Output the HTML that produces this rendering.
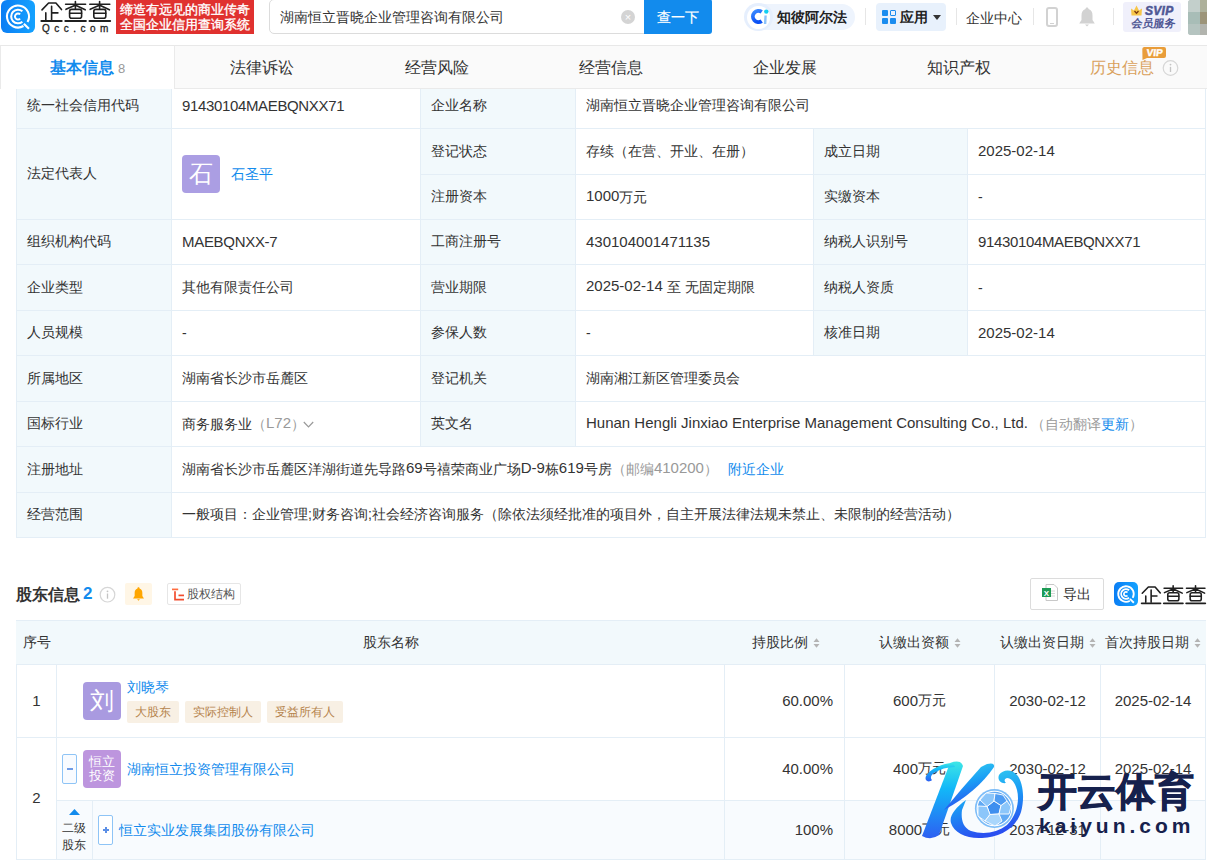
<!DOCTYPE html>
<html><head><meta charset="utf-8">
<style>
*{box-sizing:border-box;margin:0;padding:0}
html,body{width:1207px;height:861px;overflow:hidden;background:#fff}
body{position:relative;font-family:"Liberation Sans",sans-serif;color:#333;font-size:14px}
.a{position:absolute;white-space:nowrap}
.c{position:absolute;border:1px solid #e4eef6;display:flex;align-items:center;white-space:nowrap;font-size:14px;color:#333}
.lb{background:#f2f9fc}
.blue{color:#128bed}
.L{font-size:15px;position:relative;top:-1px}
.gr{color:#999}
.tag{display:inline-block;height:22px;line-height:23px;padding:0 8px;background:#f8f0e4;color:#b5834c;font-size:12px;border-radius:2px;margin-right:6px}
</style></head><body>
<div class="c lb" style="left:16px;top:83px;width:156px;height:46px;padding-left:10px;"><div>统一社会信用代码</div></div>
<div class="c" style="left:171px;top:83px;width:250px;height:46px;padding-left:10px;"><div><span style="letter-spacing:-0.35px"><span class="L">91430104MAEBQNXX71</span></span></div></div>
<div class="c lb" style="left:420px;top:83px;width:156px;height:46px;padding-left:10px;"><div>企业名称</div></div>
<div class="c" style="left:575px;top:83px;width:631px;height:46px;padding-left:10px;"><div>湖南恒立晋晓企业管理咨询有限公司</div></div>
<div class="c lb" style="left:16px;top:128px;width:156px;height:92px;padding-left:10px;"><div>法定代表人</div></div>
<div class="c" style="left:171px;top:128px;width:250px;height:92px;padding-left:10px;"><div><span style="display:inline-block;width:38px;height:38px;border-radius:4px;background:#ab9ee3;color:#fff;font-size:24px;line-height:38px;text-align:center">石</span><span class="blue" style="margin-left:11px;position:relative;top:-3px">石圣平</span></div></div>
<div class="c lb" style="left:420px;top:128px;width:156px;height:47px;padding-left:10px;"><div>登记状态</div></div>
<div class="c" style="left:575px;top:128px;width:239px;height:47px;padding-left:10px;"><div>存续（在营、开业、在册）</div></div>
<div class="c lb" style="left:813px;top:128px;width:155px;height:47px;padding-left:10px;"><div>成立日期</div></div>
<div class="c" style="left:967px;top:128px;width:239px;height:47px;padding-left:10px;"><div><span class="L">2025-02-14</span></div></div>
<div class="c lb" style="left:420px;top:174px;width:156px;height:46px;padding-left:10px;"><div>注册资本</div></div>
<div class="c" style="left:575px;top:174px;width:239px;height:46px;padding-left:10px;"><div><span class="L">1000</span>万元</div></div>
<div class="c lb" style="left:813px;top:174px;width:155px;height:46px;padding-left:10px;"><div>实缴资本</div></div>
<div class="c" style="left:967px;top:174px;width:239px;height:46px;padding-left:10px;"><div>-</div></div>
<div class="c lb" style="left:16px;top:219px;width:156px;height:46px;padding-left:10px;"><div>组织机构代码</div></div>
<div class="c" style="left:171px;top:219px;width:250px;height:46px;padding-left:10px;"><div><span style="letter-spacing:-0.3px"><span class="L">MAEBQNXX-7</span></span></div></div>
<div class="c lb" style="left:420px;top:219px;width:156px;height:46px;padding-left:10px;"><div>工商注册号</div></div>
<div class="c" style="left:575px;top:219px;width:239px;height:46px;padding-left:10px;"><div><span class="L">430104001471135</span></div></div>
<div class="c lb" style="left:813px;top:219px;width:155px;height:46px;padding-left:10px;"><div>纳税人识别号</div></div>
<div class="c" style="left:967px;top:219px;width:239px;height:46px;padding-left:10px;"><div><span style="letter-spacing:-0.35px"><span class="L">91430104MAEBQNXX71</span></span></div></div>
<div class="c lb" style="left:16px;top:264px;width:156px;height:47px;padding-left:10px;"><div>企业类型</div></div>
<div class="c" style="left:171px;top:264px;width:250px;height:47px;padding-left:10px;"><div>其他有限责任公司</div></div>
<div class="c lb" style="left:420px;top:264px;width:156px;height:47px;padding-left:10px;"><div>营业期限</div></div>
<div class="c" style="left:575px;top:264px;width:239px;height:47px;padding-left:10px;"><div><span class="L">2025-02-14 </span>至 无固定期限</div></div>
<div class="c lb" style="left:813px;top:264px;width:155px;height:47px;padding-left:10px;"><div>纳税人资质</div></div>
<div class="c" style="left:967px;top:264px;width:239px;height:47px;padding-left:10px;"><div>-</div></div>
<div class="c lb" style="left:16px;top:310px;width:156px;height:46px;padding-left:10px;"><div>人员规模</div></div>
<div class="c" style="left:171px;top:310px;width:250px;height:46px;padding-left:10px;"><div>-</div></div>
<div class="c lb" style="left:420px;top:310px;width:156px;height:46px;padding-left:10px;"><div>参保人数</div></div>
<div class="c" style="left:575px;top:310px;width:239px;height:46px;padding-left:10px;"><div>-</div></div>
<div class="c lb" style="left:813px;top:310px;width:155px;height:46px;padding-left:10px;"><div>核准日期</div></div>
<div class="c" style="left:967px;top:310px;width:239px;height:46px;padding-left:10px;"><div><span class="L">2025-02-14</span></div></div>
<div class="c lb" style="left:16px;top:355px;width:156px;height:47px;padding-left:10px;"><div>所属地区</div></div>
<div class="c" style="left:171px;top:355px;width:250px;height:47px;padding-left:10px;"><div>湖南省长沙市岳麓区</div></div>
<div class="c lb" style="left:420px;top:355px;width:156px;height:47px;padding-left:10px;"><div>登记机关</div></div>
<div class="c" style="left:575px;top:355px;width:631px;height:47px;padding-left:10px;"><div>湖南湘江新区管理委员会</div></div>
<div class="c lb" style="left:16px;top:401px;width:156px;height:46px;padding-left:10px;"><div>国标行业</div></div>
<div class="c" style="left:171px;top:401px;width:250px;height:46px;padding-left:10px;"><div>商务服务业<span class="gr">（<span class="L">L72</span>）</span><svg width="11" height="7" viewBox="0 0 11 7" style="margin-left:-2px;vertical-align:1px"><path d="M0.8 1 L5.5 5.8 L10.2 1" stroke="#999" stroke-width="1.2" fill="none"/></svg></div></div>
<div class="c lb" style="left:420px;top:401px;width:156px;height:46px;padding-left:10px;"><div>英文名</div></div>
<div class="c" style="left:575px;top:401px;width:631px;height:46px;padding-left:10px;"><div><span class="L">Hunan Hengli Jinxiao Enterprise Management Consulting Co., Ltd.</span><span class="gr" style="margin-left:3px">（自动翻译</span><span class="blue">更新</span><span class="gr">）</span></div></div>
<div class="c lb" style="left:16px;top:446px;width:156px;height:47px;padding-left:10px;"><div>注册地址</div></div>
<div class="c" style="left:171px;top:446px;width:1035px;height:47px;padding-left:10px;"><div>湖南省长沙市岳麓区洋湖街道先导路<span class="L">69</span>号禧荣商业广场<span class="L">D-9</span>栋<span class="L">619</span>号房<span class="gr">（邮编<span class="L">410200</span>）</span><span class="blue" style="margin-left:10px">附近企业</span></div></div>
<div class="c lb" style="left:16px;top:492px;width:156px;height:46px;padding-left:10px;"><div>经营范围</div></div>
<div class="c" style="left:171px;top:492px;width:1035px;height:46px;padding-left:10px;"><div>一般项目：企业管理;财务咨询;社会经济咨询服务（除依法须经批准的项目外，自主开展法律法规未禁止、未限制的经营活动）</div></div><!-- TABS -->
<div class="a" style="left:0;top:45px;width:1207px;height:44px;background:#fafafa;border-top:1px solid #e8e8e8;border-bottom:1px solid #eaeaea"></div>
<div class="a" style="left:0;top:45px;width:175px;height:44px;background:#fff;border-top:1px solid #e8e8e8;border-right:1px solid #eaeaea;border-left:1px solid #eaeaea"></div>
<div class="a" style="left:50px;top:59px;font-size:16px;line-height:18px;font-weight:bold;color:#128bed">基本信息</div>
<div class="a" style="left:118px;top:61px;font-size:13px;line-height:15px;color:#999">8</div>
<div class="a" style="left:230px;top:59px;font-size:16px;line-height:18px;color:#333">法律诉讼</div>
<div class="a" style="left:405px;top:59px;font-size:16px;line-height:18px;color:#333">经营风险</div>
<div class="a" style="left:579px;top:59px;font-size:16px;line-height:18px;color:#333">经营信息</div>
<div class="a" style="left:753px;top:59px;font-size:16px;line-height:18px;color:#333">企业发展</div>
<div class="a" style="left:927px;top:59px;font-size:16px;line-height:18px;color:#333">知识产权</div>
<div class="a" style="left:1090px;top:59px;font-size:16px;line-height:18px;color:#d9a05b">历史信息</div>
<svg class="a" style="left:1162px;top:60px" width="17" height="17" viewBox="0 0 17 17"><circle cx="8.5" cy="8" r="7.3" fill="none" stroke="#d6d6d6" stroke-width="1.2"/><circle cx="8.5" cy="4.6" r="0.9" fill="#c4c4c4"/><path d="M8.5 6.8 V12" stroke="#c4c4c4" stroke-width="1.3"/></svg>
<svg class="a" style="left:1142px;top:47px" width="25" height="14" viewBox="0 0 25 14"><path d="M2 0 H22 A2 2 0 0 1 24 2 V9 A2 2 0 0 1 22 11 H5 L0.5 13 L0.3 2 A2 2 0 0 1 2 0Z" fill="#e99d3a"/><text x="12.8" y="9.3" font-family="Liberation Sans" font-weight="bold" font-size="10" fill="#fff" stroke="#fff" stroke-width="0.4" text-anchor="middle" transform="skewX(-6)" style="transform-origin:12px 5px">VIP</text></svg>

<!-- HEADER -->
<div id="hdr">
  <!-- logo icon -->
  <div class="a" style="left:1px;top:0;width:34px;height:33px;border-radius:6px;background:linear-gradient(90deg,#0b7ef4,#14a2ff)"></div>
  <svg class="a" style="left:1px;top:0" width="34" height="33" viewBox="0 0 34 33">
    <path d="M26.53 22 A11 11 0 1 0 22.5 26.03" fill="none" stroke="#fff" stroke-width="2.1"/>
    <path d="M23.6 24.4 L27.2 28" stroke="#fff" stroke-width="2.1" stroke-linecap="square"/>
    <path d="M21.37 11.29 A6.8 6.8 0 1 0 21.37 21.71" fill="none" stroke="#fff" stroke-width="2.1"/>
    <path d="M19.12 14.38 A3 3 0 1 0 19.12 18.62" fill="none" stroke="#fff" stroke-width="2"/>
  </svg>
  <svg class="a" style="left:0;top:0" width="116" height="24" viewBox="0 0 116 24"><g fill="none" stroke="#1f1f1f" stroke-width="1.6" stroke-linecap="round" stroke-linejoin="round"><path d="M42 9.9 L48.6 3 H55.9 L61.5 9.6 M51.6 6.3 V20 M51.6 12.9 H57.9 M45.8 12.9 V20"/><path d="M41.4 21.1 H61.7" stroke-width="2"/><g transform="translate(0,0)"><path d="M75.4 1.6 V8.4 M65.6 4.3 H85.6 M75.2 5.2 L66 9.3 M75.6 5.2 L85.2 9.8"/><rect x="69.6" y="9.4" width="12" height="8.8" rx="2"/><path d="M69.6 13.3 H81.6"/><path d="M65.3 21.1 H85.9" stroke-width="2"/></g><g transform="translate(24.2,0)"><path d="M75.4 1.6 V8.4 M65.6 4.3 H85.6 M75.2 5.2 L66 9.3 M75.6 5.2 L85.2 9.8"/><rect x="69.6" y="9.4" width="12" height="8.8" rx="2"/><path d="M69.6 13.3 H81.6"/><path d="M65.3 21.1 H85.9" stroke-width="2"/></g></g></svg>
  <div class="a" style="left:42px;top:23px;font-size:10px;line-height:11px;letter-spacing:4.5px;color:#1f1f1f;-webkit-text-stroke:0.3px #1f1f1f">Qcc.com</div>
  <div class="a" style="left:116px;top:0;width:138px;height:34px;background:#e0312f"></div>
  <div class="a" style="left:120px;top:2px;font-size:13px;line-height:15px;color:#fff;-webkit-text-stroke:0.35px #fff">缔造有远见的商业传奇<br>全国企业信用查询系统</div>

  <!-- search -->
  <div class="a" style="left:269px;top:-1px;width:380px;height:35px;border:1px solid #dcdcdc;border-radius:5px;background:#fff"></div>
  <div class="a" style="left:280px;top:9px;font-size:14px;line-height:16px;color:#333">湖南恒立晋晓企业管理咨询有限公司</div>
  <div class="a" style="left:621px;top:10px;width:14px;height:14px;border-radius:7px;background:#d4d4d4;color:#fff;font-size:11px;line-height:14px;text-align:center">×</div>
  <div class="a" style="left:644px;top:-1px;width:68px;height:35px;background:#128bed;border-radius:0 3px 3px 0;color:#fff;font-size:14px;line-height:36px;text-align:center;-webkit-text-stroke:0.2px #fff">查一下</div>

  <!-- right menu -->
  <div class="a" style="left:745px;top:4px;width:110px;height:26px;border-radius:13px;background:#eef4fd"></div>
  <div class="a" style="left:744px;top:3px;width:29px;height:28px;border-radius:14px;background:#e6effd"></div><div class="a" style="left:747px;top:5.5px;width:23px;height:23px;border-radius:12px;background:#fff"></div>
  <svg class="a" style="left:749px;top:7px" width="20" height="20" viewBox="0 0 20 20"><defs><linearGradient id="cig" x1="0" y1="0" x2="0.4" y2="1"><stop offset="0" stop-color="#3d8bff"/><stop offset="1" stop-color="#0a50f5"/></linearGradient></defs><path d="M12.71 4.91 A5.6 5.6 0 1 0 12.71 14.09" fill="none" stroke="url(#cig)" stroke-width="3.8"/><circle cx="17.3" cy="4.6" r="2.2" fill="#12d0f2"/><path d="M16.6 8.5 L16.1 17" stroke="#8cc2fa" stroke-width="2.4"/></svg>
  <div class="a" style="left:777px;top:9px;font-size:14px;line-height:16px;font-weight:bold;color:#222">知彼阿尔法</div>
  <div class="a" style="left:865px;top:8px;width:1px;height:17px;background:#e6e6e6"></div>
  <div class="a" style="left:876px;top:3px;width:70px;height:28px;border-radius:4px;background:#e8f1fc"></div>
  <div class="a" style="left:882px;top:10px;width:6px;height:6px;background:#1a8cef;border-radius:1px"></div>
  <div class="a" style="left:890px;top:10px;width:6px;height:6px;border:1px solid #1a8cef;border-radius:1px"></div>
  <div class="a" style="left:882px;top:18px;width:6px;height:6px;background:#1a8cef;border-radius:1px"></div>
  <div class="a" style="left:890px;top:18px;width:6px;height:6px;background:#1a8cef;border-radius:1px"></div>
  <div class="a" style="left:900px;top:9px;font-size:14px;line-height:16px;font-weight:bold;color:#222">应用</div>
  <div class="a" style="left:933px;top:15px;width:0;height:0;border-left:4px solid transparent;border-right:4px solid transparent;border-top:5px solid #333"></div>
  <div class="a" style="left:956px;top:8px;width:1px;height:17px;background:#e6e6e6"></div>
  <div class="a" style="left:966px;top:10px;font-size:14px;line-height:16px;color:#333">企业中心</div>
  <div class="a" style="left:1033px;top:8px;width:1px;height:17px;background:#e6e6e6"></div>
  <div class="a" style="left:1046px;top:7px;width:12px;height:20px;border:2px solid #d2d2d2;border-radius:3px"></div>
  <div class="a" style="left:1050px;top:23px;width:4px;height:1px;background:#d2d2d2"></div>
  <svg class="a" style="left:1079px;top:7px" width="16" height="20" viewBox="0 0 16 20"><path d="M8 0.5 C9 0.5 9.5 1.2 9.5 2 C12.5 2.8 13.5 5.5 13.5 8.5 L13.5 13 L15.8 16.5 L0.2 16.5 L2.5 13 L2.5 8.5 C2.5 5.5 3.5 2.8 6.5 2 C6.5 1.2 7 0.5 8 0.5Z M6 17.5 L10 17.5 L8 19.5Z" fill="#d2d2d2"/></svg>
  <div class="a" style="left:1113px;top:8px;width:1px;height:17px;background:#e6e6e6"></div>
  <div class="a" style="left:1123px;top:2px;width:58px;height:30px;border-radius:3px;background:#f0f0fb"></div>
  <svg class="a" style="left:1131px;top:5px" width="11" height="11" viewBox="0 0 11 11"><path d="M0 3.5 L3 5.5 L5.5 0.5 L8 5.5 L11 3.5 L10.5 10.5 L0.5 10.5Z" fill="#f7c64a"/><path d="M3.5 6 L5.5 8.2 L7.5 6" stroke="#7a3a10" stroke-width="1.3" fill="none"/></svg>
  <div class="a" style="left:1145px;top:5px;font-size:12px;line-height:12px;font-weight:bold;font-style:italic;color:#4f5794;-webkit-text-stroke:0.5px #4f5794;letter-spacing:0.3px">SVIP</div>
  <div class="a" style="left:1131px;top:17px;font-size:11px;line-height:13px;font-weight:bold;color:#4f5794;transform:skewX(-8deg);transform-origin:left bottom">会员服务</div>
  <div class="a" style="left:1188px;top:0;width:19px;height:35px;border-radius:3px 0 0 3px;overflow:hidden;background:#b4c2bd">
<div class="a" style="left:0;top:0;width:12px;height:12px;background:#c3cfcb"></div><div class="a" style="left:12px;top:0;width:7px;height:12px;background:#adb09a"></div>
<div class="a" style="left:0;top:12px;width:12px;height:12px;background:#a8bdb7"></div><div class="a" style="left:12px;top:12px;width:7px;height:12px;background:#9c9479"></div>
<div class="a" style="left:0;top:24px;width:12px;height:11px;background:#b5c4c0"></div><div class="a" style="left:12px;top:24px;width:7px;height:11px;background:#b2b4ae"></div></div>
</div>


<div class="a" style="left:16px;top:585px;font-size:16px;line-height:19px;font-weight:bold;color:#333">股东信息</div>
<div class="a" style="left:83px;top:584px;font-size:17px;line-height:20px;font-weight:bold;color:#128bed">2</div>
<svg class="a" style="left:99px;top:586px" width="17" height="17" viewBox="0 0 17 17"><circle cx="8.5" cy="8.7" r="7.3" fill="none" stroke="#d6d6d6" stroke-width="1.2"/><circle cx="8.5" cy="5.3" r="0.9" fill="#c4c4c4"/><path d="M8.5 7.5 V12.7" stroke="#c4c4c4" stroke-width="1.3"/></svg>
<div class="a" style="left:125px;top:583px;width:27px;height:22px;background:#fff6e6;border-radius:2px"></div>
<svg class="a" style="left:132px;top:587px" width="13" height="14" viewBox="0 0 16 20"><path d="M8 0.5 C9 0.5 9.5 1.2 9.5 2 C12.5 2.8 13.5 5.5 13.5 8.5 L13.5 13 L15.8 16.5 L0.2 16.5 L2.5 13 L2.5 8.5 C2.5 5.5 3.5 2.8 6.5 2 C6.5 1.2 7 0.5 8 0.5Z M6 17.5 L10 17.5 L8 19.5Z" fill="#ffa600"/></svg>
<div class="a" style="left:167px;top:583px;width:74px;height:22px;border:1px solid #e6e6e6;border-radius:2px"></div>
<svg class="a" style="left:171px;top:587px" width="14" height="15" viewBox="0 0 14 15"><path d="M1 2.4 H7.2" stroke="#ff6d3f" stroke-width="1.7" fill="none"/><path d="M4 4.3 V12.6 H13" stroke="#f24d2e" stroke-width="1.7" fill="none"/><path d="M7.5 8.4 H13" stroke="#f24d2e" stroke-width="1.7" fill="none"/></svg>
<div class="a" style="left:187px;top:587px;font-size:12px;line-height:14px;color:#555">股权结构</div>

<div class="a" style="left:1030px;top:578px;width:74px;height:32px;border:1px solid #dcdcdc;border-radius:2px;background:#fff"></div>
<svg class="a" style="left:1042px;top:584px" width="16" height="17" viewBox="0 0 16 17"><path d="M4 0.5 H12 L15.5 4 V16.5 H4Z" fill="#fff" stroke="#c8c8c8"/><path d="M9 7H13M9 9.5H13M9 12H13" stroke="#ccc" stroke-width="0.8"/><rect x="0" y="4" width="9" height="9" fill="#1d9b55"/><text x="4.5" y="11.5" font-family="Liberation Sans" font-weight="bold" font-size="8" fill="#fff" text-anchor="middle">X</text></svg>
<div class="a" style="left:1063px;top:586px;font-size:14px;line-height:16px;color:#333">导出</div>
<div class="a" style="left:1114px;top:582px;width:24px;height:24px;border-radius:5px;background:linear-gradient(90deg,#0b7ef4,#14a2ff)"></div>
<svg class="a" style="left:1114px;top:582px" width="24" height="24" viewBox="0 0 34 33">
    <path d="M26.53 22 A11 11 0 1 0 22.5 26.03" fill="none" stroke="#fff" stroke-width="2.6"/>
    <path d="M23.6 24.4 L27.2 28" stroke="#fff" stroke-width="2.6" stroke-linecap="square"/>
    <path d="M21.37 11.29 A6.8 6.8 0 1 0 21.37 21.71" fill="none" stroke="#fff" stroke-width="2.6"/>
    <path d="M19.12 14.38 A3 3 0 1 0 19.12 18.62" fill="none" stroke="#fff" stroke-width="2.4"/>
</svg>
<svg class="a" style="left:1100px;top:580px" width="107" height="26" viewBox="0 0 107 26"><g transform="translate(3.4,4.3) scale(0.925,0.9)"><g fill="none" stroke="#1f1f1f" stroke-width="1.7" stroke-linecap="round" stroke-linejoin="round"><path d="M42 9.9 L48.6 3 H55.9 L61.5 9.6 M51.6 6.3 V20 M51.6 12.9 H57.9 M45.8 12.9 V20"/><path d="M41.4 21.1 H61.7" stroke-width="2"/><g transform="translate(0,0)"><path d="M75.4 1.6 V8.4 M65.6 4.3 H85.6 M75.2 5.2 L66 9.3 M75.6 5.2 L85.2 9.8"/><rect x="69.6" y="9.4" width="12" height="8.8" rx="2"/><path d="M69.6 13.3 H81.6"/><path d="M65.3 21.1 H85.9" stroke-width="2"/></g><g transform="translate(24.2,0)"><path d="M75.4 1.6 V8.4 M65.6 4.3 H85.6 M75.2 5.2 L66 9.3 M75.6 5.2 L85.2 9.8"/><rect x="69.6" y="9.4" width="12" height="8.8" rx="2"/><path d="M69.6 13.3 H81.6"/><path d="M65.3 21.1 H85.9" stroke-width="2"/></g></g></g></svg>
<div class="c" style="left:16px;top:620px;width:1190px;height:45px;background:#f2f9fc;"><div style="display:flex;align-items:center"></div></div>
<div class="c" style="left:16px;top:620px;width:41px;height:45px;background:#f2f9fc;padding-left:7px;border:none;top:621px;height:43px"><div style="display:flex;align-items:center">序号</div></div>
<div class="c" style="left:56px;top:620px;width:669px;height:45px;background:#f2f9fc;justify-content:center;border:none;top:621px;height:43px"><div style="display:flex;align-items:center">股东名称</div></div>
<div class="c" style="left:724px;top:620px;width:121px;height:45px;background:#f2f9fc;justify-content:flex-end;padding-right:25px;border:none;top:621px;height:43px"><div style="display:flex;align-items:center">持股比例<svg width="7" height="12" viewBox="0 0 7 12" style="margin-left:5px"><path d="M0.5 5 L3.5 1.2 L6.5 5Z M0.5 7 L3.5 10.8 L6.5 7Z" fill="#b4b4b4"/></svg></div></div>
<div class="c" style="left:844px;top:620px;width:151px;height:45px;background:#f2f9fc;justify-content:center;border:none;top:621px;height:43px"><div style="display:flex;align-items:center">认缴出资额<svg width="7" height="12" viewBox="0 0 7 12" style="margin-left:5px"><path d="M0.5 5 L3.5 1.2 L6.5 5Z M0.5 7 L3.5 10.8 L6.5 7Z" fill="#b4b4b4"/></svg></div></div>
<div class="c" style="left:994px;top:620px;width:107px;height:45px;background:#f2f9fc;justify-content:center;border:none;top:621px;height:43px"><div style="display:flex;align-items:center">认缴出资日期<svg width="7" height="12" viewBox="0 0 7 12" style="margin-left:5px"><path d="M0.5 5 L3.5 1.2 L6.5 5Z M0.5 7 L3.5 10.8 L6.5 7Z" fill="#b4b4b4"/></svg></div></div>
<div class="c" style="left:1100px;top:620px;width:106px;height:45px;background:#f2f9fc;justify-content:center;border:none;top:621px;height:43px"><div style="display:flex;align-items:center">首次持股日期<svg width="7" height="12" viewBox="0 0 7 12" style="margin-left:5px"><path d="M0.5 5 L3.5 1.2 L6.5 5Z M0.5 7 L3.5 10.8 L6.5 7Z" fill="#b4b4b4"/></svg></div></div>
<div class="c" style="left:16px;top:664px;width:41px;height:74px;background:#fff;justify-content:center"><div style="display:flex;align-items:center"><span class="L">1</span></div></div>
<div class="c" style="left:56px;top:664px;width:669px;height:74px;background:#fff;"><div style="display:flex;align-items:center"></div></div>
<div class="c" style="left:724px;top:664px;width:121px;height:74px;background:#fff;justify-content:flex-end;padding-right:11px"><div style="display:flex;align-items:center"><span class="L">60.00%</span></div></div>
<div class="c" style="left:844px;top:664px;width:151px;height:74px;background:#fff;justify-content:center"><div style="display:flex;align-items:center"><span class="L">600</span>万元</div></div>
<div class="c" style="left:994px;top:664px;width:107px;height:74px;background:#fff;justify-content:center"><div style="display:flex;align-items:center"><span class="L">2030-02-12</span></div></div>
<div class="c" style="left:1100px;top:664px;width:106px;height:74px;background:#fff;justify-content:center"><div style="display:flex;align-items:center"><span class="L">2025-02-14</span></div></div>
<div class="c" style="left:16px;top:737px;width:41px;height:123px;background:#fff;justify-content:center"><div style="display:flex;align-items:center"><span class="L">2</span></div></div>
<div class="c" style="left:56px;top:737px;width:669px;height:64px;background:#fff;"><div style="display:flex;align-items:center"></div></div>
<div class="c" style="left:724px;top:737px;width:121px;height:64px;background:#fff;justify-content:flex-end;padding-right:11px"><div style="display:flex;align-items:center"><span class="L">40.00%</span></div></div>
<div class="c" style="left:844px;top:737px;width:151px;height:64px;background:#fff;justify-content:center"><div style="display:flex;align-items:center"><span class="L">400</span>万元</div></div>
<div class="c" style="left:994px;top:737px;width:107px;height:64px;background:#fff;justify-content:center"><div style="display:flex;align-items:center"><span class="L">2030-02-12</span></div></div>
<div class="c" style="left:1100px;top:737px;width:106px;height:64px;background:#fff;justify-content:center"><div style="display:flex;align-items:center"><span class="L">2025-02-14</span></div></div>
<div class="c" style="left:56px;top:800px;width:37px;height:60px;background:#f8fbfe;"><div style="display:flex;align-items:center"></div></div>
<div class="c" style="left:92px;top:800px;width:633px;height:60px;background:#f8fbfe;"><div style="display:flex;align-items:center"></div></div>
<div class="c" style="left:724px;top:800px;width:121px;height:60px;background:#f8fbfe;justify-content:flex-end;padding-right:11px"><div style="display:flex;align-items:center"><span class="L">100%</span></div></div>
<div class="c" style="left:844px;top:800px;width:151px;height:60px;background:#f8fbfe;justify-content:center"><div style="display:flex;align-items:center"><span class="L">8000</span>万元</div></div>
<div class="c" style="left:994px;top:800px;width:107px;height:60px;background:#f8fbfe;justify-content:center"><div style="display:flex;align-items:center"><span class="L">2037-12-31</span></div></div>
<div class="c" style="left:1100px;top:800px;width:106px;height:60px;background:#f8fbfe;justify-content:center"><div style="display:flex;align-items:center"></div></div>
<div class="a" style="left:83px;top:682px;width:38px;height:38px;border-radius:4px;background:#a99ae0;color:#fff;font-size:24px;line-height:38px;text-align:center">刘</div>
<div class="a blue" style="left:127px;top:679px;font-size:14px;line-height:16px">刘晓琴</div>
<div class="a" style="left:127px;top:701px"><span class="tag">大股东</span><span class="tag">实际控制人</span><span class="tag">受益所有人</span></div>

<div class="a" style="left:62px;top:754px;width:15px;height:30px;border:1px solid #8ec4f6;border-radius:2px;background:#f8fbff"></div><div class="a" style="left:67px;top:768px;width:6px;height:2px;background:#6f9be6"></div>
<div class="a" style="left:83px;top:750px;width:38px;height:38px;border-radius:4px;background:#bd95de;color:#fff;font-size:13px;line-height:14px;text-align:center;padding-top:5px">恒立<br>投资</div>
<div class="a blue" style="left:127px;top:761px;font-size:14px;line-height:16px">湖南恒立投资管理有限公司</div>

<svg class="a" style="left:69px;top:809px" width="11" height="6" viewBox="0 0 11 6"><path d="M0 6 L5.5 0 L11 6Z" fill="#128bed"/></svg>
<div class="a" style="left:62px;top:820px;font-size:12px;line-height:17px;color:#333;white-space:normal;width:26px">二级<br>股东</div>
<div class="a" style="left:98px;top:815px;width:15px;height:30px;border:1px solid #8ec4f6;border-radius:2px;background:#fff"></div><div class="a" style="left:103px;top:829px;width:6px;height:1.5px;background:#5b8fe6"></div><div class="a" style="left:105.25px;top:826.75px;width:1.5px;height:6px;background:#5b8fe6"></div>
<div class="a blue" style="left:119px;top:822px;font-size:14px;line-height:16px">恒立实业发展集团股份有限公司</div>

<!-- watermark -->
<svg class="a" style="left:915px;top:750px" width="120" height="95" viewBox="0 0 120 95">
<defs>
<linearGradient id="kg" x1="0" y1="0" x2="0" y2="1"><stop offset="0" stop-color="#3ee6e6"/><stop offset="0.35" stop-color="#12b8f8"/><stop offset="1" stop-color="#2d5ff2"/></linearGradient>
<linearGradient id="kg2" x1="0" y1="0" x2="0.3" y2="1"><stop offset="0" stop-color="#38d8ee"/><stop offset="0.5" stop-color="#1a9ef5"/><stop offset="1" stop-color="#2a4ff0"/></linearGradient>
<radialGradient id="ballg" cx="0.45" cy="0.4" r="0.65"><stop offset="0" stop-color="#7cc0fa"/><stop offset="1" stop-color="#3d8ef2"/></radialGradient>
</defs>
<path d="M35 13 Q46 9 48 16 L24 85 Q16 91 7 86 Z" fill="url(#kg)"/>
<path d="M38 13 C28 13 15 19 11 26 C9 31 14 33 17 30 C15 28 16 25 19 23 C25 19 32 17 40 17 Z" fill="url(#kg)"/>
<path d="M72 14 Q80 12 79 17 Q62 42 29 60 Q47 38 66 17 Z" fill="url(#kg2)"/>
<path d="M51 50 C40 58 34 66 36 73 C39 83 52 89 67 88 C84 87 100 80 106 62 C110 48 108 32 102 25 C97 19 88 19 84 25 C82 30 86 34 91 33 C89 31 89 29 92 28 C96 28 100 32 102 40 C105 52 101 66 92 75 C82 83 68 85 56 81 C47 77 46 68 47 60 Z" fill="url(#kg2)"/>
<circle cx="79.4" cy="58.5" r="19.5" fill="#7dbdf8"/>
<circle cx="79.4" cy="58.5" r="17.3" fill="#62aaf4" stroke="#fff" stroke-width="1.1"/>
<g fill="#3f8fef" stroke="#fff" stroke-width="0.9">
<path d="M79 51 L86 55.5 L84 64 L75 64.5 L72 56.5Z"/>
<path d="M86 55.5 L92 51 L96 57 L94 64 L84 64Z" fill="#8cc6fa"/>
<path d="M72 56.5 L75 64.5 L70 71 L63 66 L63 56Z" fill="#8cc6fa"/>
<path d="M79 51 L72 56.5 L65 50 L71 43 L80 43.5Z" fill="#8cc6fa"/>
<path d="M75 64.5 L84 64 L87 71 L80 76 L70 71Z" fill="#a9d6fc"/>
<path d="M80 43.5 L88 45 L92 51 L86 55.5 L79 51Z" fill="#4f9cf2"/>
</g>
</svg>
<div class="a" style="left:1038px;top:770px;font-size:39px;line-height:44px;font-weight:900;color:#16214d;-webkit-text-stroke:0.9px #16214d">开云体育</div>
<div class="a" style="left:1039px;top:814px;font-size:21px;line-height:24px;font-weight:bold;color:#16214d;letter-spacing:4px">kaiyun.com</div>
</body></html>
